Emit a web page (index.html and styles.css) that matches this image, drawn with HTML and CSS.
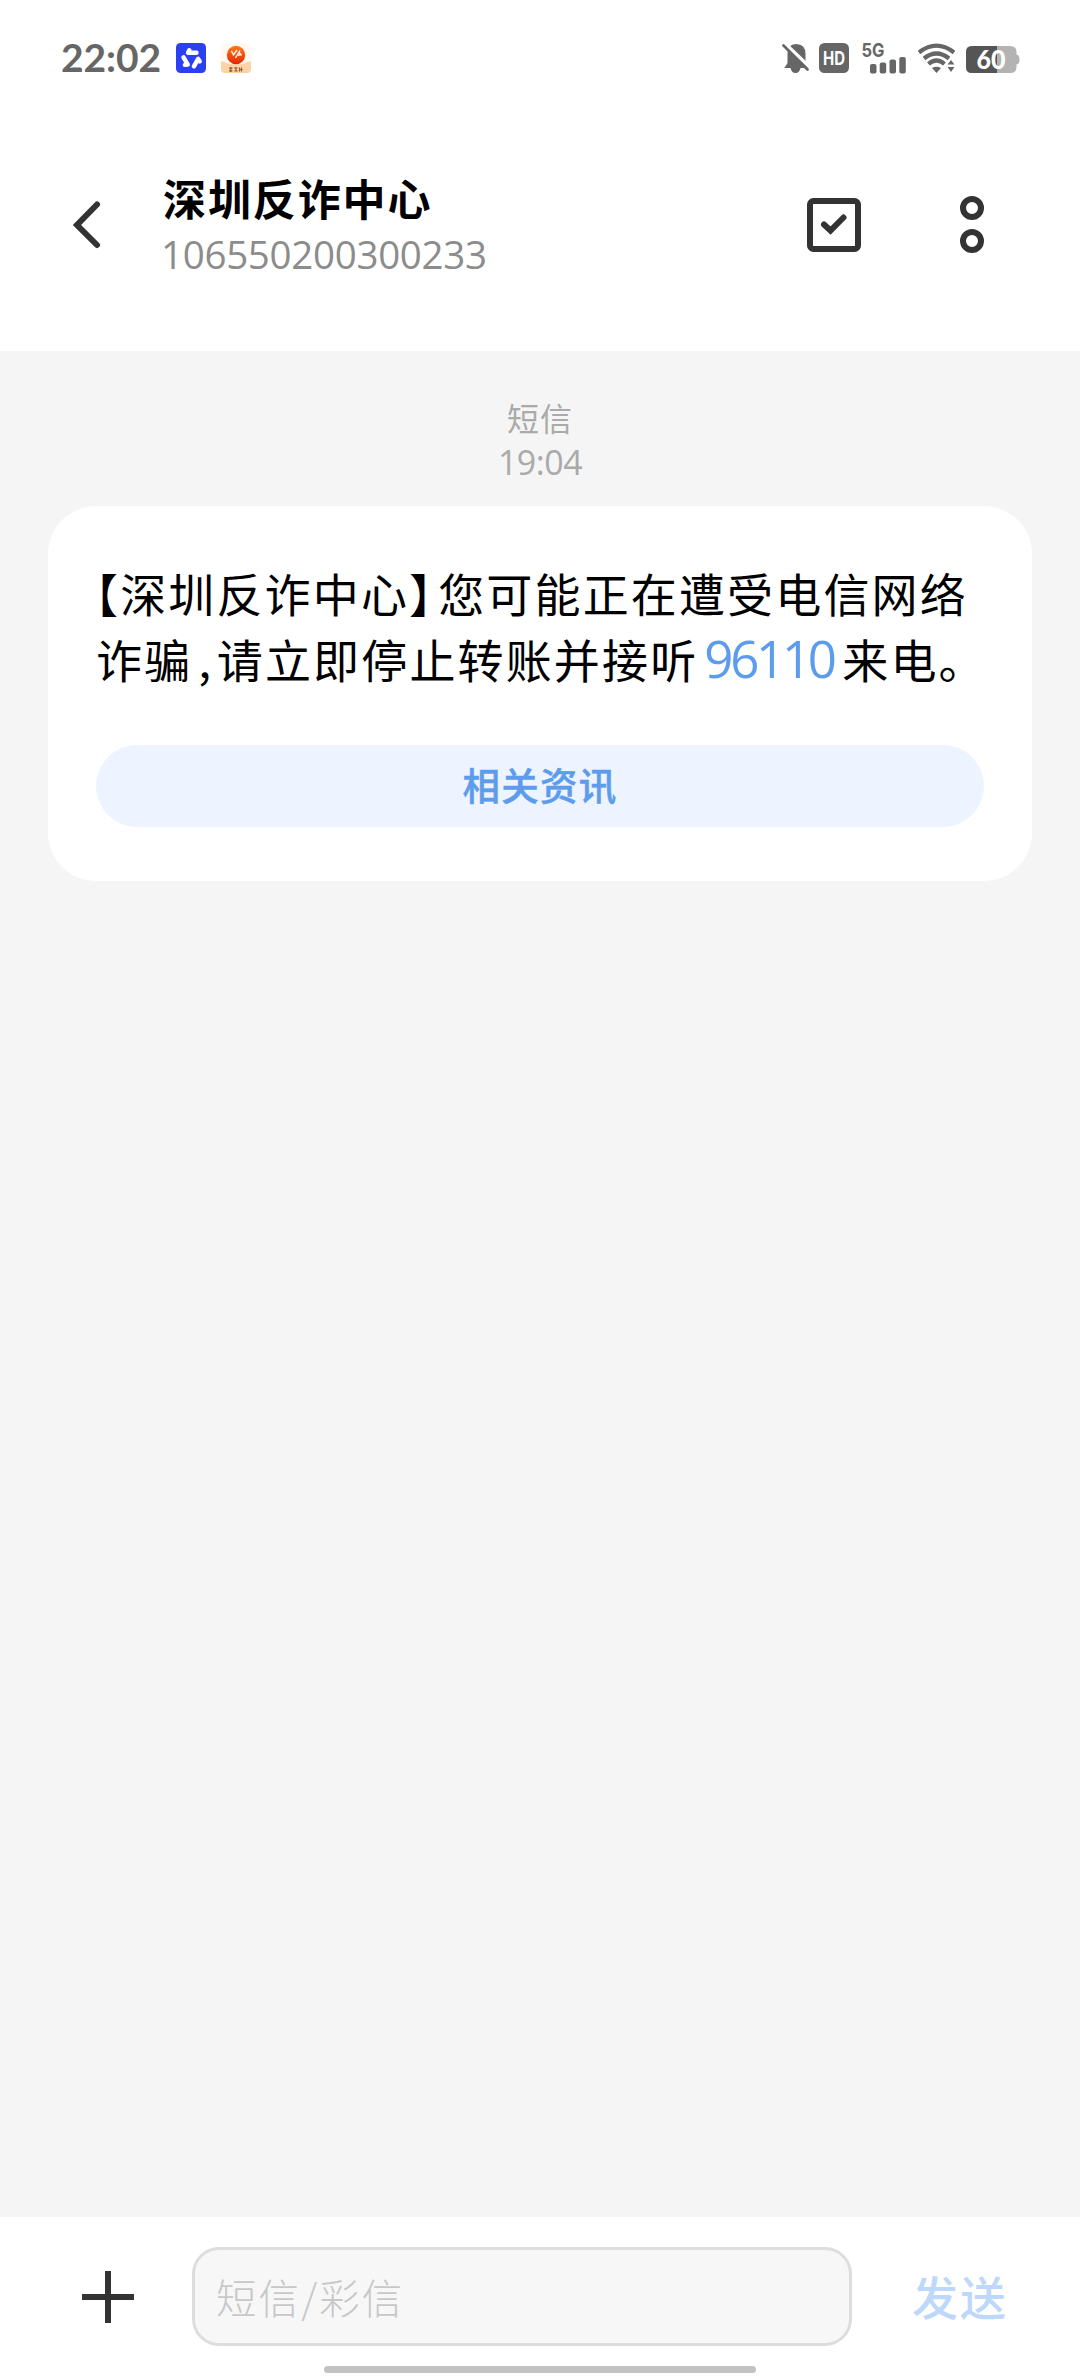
FILE: index.html
```html
<!DOCTYPE html>
<html lang="zh-CN">
<head>
<meta charset="utf-8">
<title>深圳反诈中心</title>
<link rel="stylesheet" href="styles.css">
</head>
<body>
<div class="screen">
  <div class="status">
    <span class="clock">22:02</span>
    <svg class="app-blue" width="30" height="30" viewBox="0 0 30 30">
      <rect width="30" height="30" rx="4.5" fill="#2b3ff5"/>
      <g stroke="#fff" stroke-width="4.4" stroke-linecap="round" stroke-linejoin="round" fill="none">
        <path d="M13.300 7.200L12 9.800H20.500"/>
        <path d="M13.300 7.200L12 9.800H20.500" transform="rotate(120 15.300 15.800)"/>
        <path d="M13.300 7.200L12 9.800H20.500" transform="rotate(240 15.300 15.800)"/>
      </g>
    </svg>
    <svg class="app-orange" width="32" height="30" viewBox="0 0 32 30">
      <defs><linearGradient id="ball" x1="0" y1="0" x2="0" y2="1"><stop offset="0" stop-color="#ff7a1a"/><stop offset="1" stop-color="#e52508"/></linearGradient></defs>
      <rect x="1" width="30" height="30" rx="5" fill="#fff9f2"/>
      <path d="M1 18Q16 25 31 18V26Q31 30 27 30H5Q1 30 1 26Z" fill="#fbd3a4"/>
      <circle cx="16" cy="12" r="9.200" fill="url(#ball)"/>
      <path d="M11.500 8L13.500 12L17 7M15.500 15L20 7.500M18.500 13L20 10.500L21.500 12.500" fill="none" stroke="#fff" stroke-width="1.400"/>
      <path d="M9 25.200H12.500M9 27.800H12.500M10.800 24V29M14.200 24.800H17.500M14.200 28H17.500M16 25V28M19.500 24.500V28.500M21.500 24.500V28.500M19.500 26.500H22.500" stroke="#9b5931" stroke-width="1.200"/>
    </svg>
    <svg class="bell" width="28" height="31" viewBox="0 0 28 31">
      <path d="M3 24L5.500 20V11Q5.500 1 14 1Q23.500 1 23.500 11V20L26 25H18.500Q17.500 30 13.500 30Q9.500 30 8.500 25H2Z" fill="#666"/>
      <path d="M2.500 0L28 24.500" stroke="#fff" stroke-width="3.500"/>
      <path d="M1.500 2.500L25.500 26.500" stroke="#666" stroke-width="2.700" stroke-linecap="round"/>
    </svg>
    <svg class="hd" width="30" height="30" viewBox="0 0 30 30">
      <rect width="30" height="30" rx="5.500" fill="#666"/>
      <text x="4" y="21.800" textLength="22" lengthAdjust="spacingAndGlyphs" class="hd-text">HD</text>
    </svg>
    <svg class="signal" width="45" height="39" viewBox="0 -8 45 39">
      <text x="0.500" y="14.200" textLength="23" lengthAdjust="spacingAndGlyphs" class="net-text">5G</text>
      <g fill="#666"><rect x="9" y="21" width="6.500" height="9.500" rx="2"/><rect x="18.700" y="19.500" width="6.500" height="11" rx="2"/><rect x="28.500" y="16.500" width="6.500" height="14" rx="2"/><rect x="38.300" y="14" width="6.500" height="16.500" rx="2"/></g>
    </svg>
    <svg class="wifi" width="37" height="30" viewBox="0 0 37 30">
      <g fill="none" stroke="#666" stroke-width="4.200"><path d="M1 9.500Q18.500-4.200 36 9.500"/><path d="M6 15.500Q18.500 5.500 31 15.500"/><path d="M10.500 21Q18.500 14 26.500 21"/></g>
      <path d="M14 25Q18.500 22.500 23 25L18.500 30Z" fill="#666"/>
      <path d="M27.500 22.800L33 15L39 22.800L33 31Z" fill="#fff"/>
      <path d="M29.500 21.500L33 17L36.500 21.500ZM29.500 24L33 29L36.500 24Z" fill="#666"/>
    </svg>
    <svg class="battery" width="54" height="41" viewBox="0 -7 54 41">
      <path d="M6 0H44Q50.500 0 50.500 6V8.500Q53.500 9 53.500 13.500Q53.500 18 50.500 18.500V21Q50.500 27 44 27H6Q0 27 0 21V6Q0 0 6 0Z" fill="#b3b3b3"/>
      <path d="M6 0H31V27H6Q0 27 0 21V6Q0 0 6 0Z" fill="#555"/>
      <text x="10.500" y="23" textLength="29" lengthAdjust="spacingAndGlyphs" class="bat-text">60</text>
    </svg>
  </div>

  <header class="header">
    <svg class="back" width="30" height="50" viewBox="0 0 30 50"><path d="M25 4.500L5 25L25 45" fill="none" stroke="#333" stroke-width="6" stroke-linecap="round"/></svg>
    <div class="contact">
      <h1 class="name">深圳反诈中心</h1>
      <div class="number">106550200300233</div>
    </div>
    <svg class="select" width="54" height="54" viewBox="0 0 54 54" fill="none" stroke="#333" stroke-width="6">
      <rect x="3" y="3" width="48" height="48" rx="3.500"/>
      <path d="M17 26.500L23.500 32.500L36.500 19.500" stroke-linecap="round"/>
    </svg>
    <svg class="more" width="24" height="57" viewBox="0 0 24 57" fill="none" stroke="#333" stroke-width="6"><circle cx="12" cy="12" r="9"/><circle cx="12" cy="45" r="9"/></svg>
  </header>

  <main class="chat">
    <div class="kind">短信</div>
    <div class="sent-at">19:04</div>
    <section class="bubble">
      <p class="message"><span class="open">【</span>深圳反诈中心<span class="close">】</span>您可能正在遭受电信网络<br>诈骗<span class="comma">,</span>请立即停止转账并接听<a class="tel">96110</a>来电。</p>
      <div class="related">相关资讯</div>
    </section>
  </main>

  <footer class="composer">
    <div class="bar">
      <svg class="plus" width="54" height="54" viewBox="0 0 54 54"><path d="M27 1V53M1 27H53" stroke="#333" stroke-width="6"/></svg>
      <div class="field">短信/彩信</div>
      <div class="send">发送</div>
    </div>
    <div class="home"></div>
  </footer>
</div>
</body>
</html>
```
FILE: styles.css
```css
* { box-sizing: border-box; }
body { margin: 0; background: #fff; font-family: "Noto Sans CJK SC", sans-serif; }
svg { display: block; flex: none; }
.screen { width: 1080px; height: 2376px; display: flex; flex-direction: column; overflow: hidden; }

.status { height: 116px; display: flex; align-items: center; padding-left: 61px; flex: none; }
.clock { width: 115px; font: 700 39px/40px Lato, sans-serif; color: #666; letter-spacing: -0.1px; margin-top: -2px; }
.app-orange { margin-left: 14px; }
.bell { margin-left: 530px; }
.hd { margin-left: 9px; }
.signal { margin: -8px 0 0 12px; }
.wifi { margin-left: 12px; }
.battery { margin: 3px 0 0 11px; }
.hd-text { font: 700 18.500px Inter, sans-serif; fill: #fff; }
.net-text { font: 700 19px Inter, sans-serif; fill: #666; }
.bat-text { font: 900 26.500px Lato, sans-serif; fill: #fff; }

.header { height: 235px; flex: none; display: flex; align-items: flex-start; padding-left: 72px; }
.back { margin-top: 84px; }
.contact { width: 643px; margin-left: 61px; padding-top: 55px; }
.name { margin: 0; font-size: 43px; line-height: 52px; font-weight: 700; letter-spacing: 1.900px; color: #000; }
.number { margin-top: 5px; margin-left: -2px; font: 400 38.500px/52px "Open Sans", sans-serif; color: #8c8c8c; letter-spacing: -0.300px; }
.select { margin: 82px 0 0 1px; }
.more { margin: 80px 0 0 99px; }

.chat { flex: 1; background: #f5f5f5; padding: 44px 48px 0; text-align: center; }
.kind { font-size: 32px; line-height: 44px; letter-spacing: 1px; color: #aaa; }
.sent-at { font: 400 34px/44px "Open Sans", sans-serif; color: #aaa; letter-spacing: -0.500px; margin-top: 1px; }
.bubble { margin-top: 22px; height: 375px; padding: 53px 48px 0; border-radius: 48px; background: #fff; text-align: left; }
.message { margin: 0; height: 132px; font-size: 46px; line-height: 66px; letter-spacing: 2.150px; color: #000; white-space: nowrap; }
.open, .close { font-feature-settings: "halt"; }
.open { margin-left: -1px; }
.close { margin-right: 4px; }
.comma { display: inline-block; width: 24.500px; padding-left: 6px; }
.tel { display: inline-block; width: 144px; padding-left: 6px; font: 400 51px/60px "Open Sans", sans-serif; letter-spacing: -3.300px; color: #5d9cec; }
.related { margin-top: 54px; height: 82px; border-radius: 41px; background: #eef4ff; color: #5d9cec; text-align: center; font-size: 37.500px; font-weight: 500; line-height: 78px; letter-spacing: 1.300px; -webkit-text-stroke: 0.500px #5d9cec; }

.composer { height: 159px; flex: none; background: #fff; }
.bar { display: flex; align-items: center; padding: 30px 0 0 81px; }
.field { width: 660px; height: 99px; margin-left: 57px; padding-left: 21px; border: 3px solid #ddd; border-radius: 27px; background: #f7f7f7; color: #c8c8c8; font-size: 40.500px; font-weight: 300; line-height: 94px; letter-spacing: 2.100px; }
.send { margin-left: 60px; margin-top: -4px; color: #bdd8fb; font-size: 46px; font-weight: 500; line-height: 80px; letter-spacing: 2px; }
.home { width: 432px; height: 7px; margin: 20px auto 0; border-radius: 4px; background: #c2c2c2; }
```
